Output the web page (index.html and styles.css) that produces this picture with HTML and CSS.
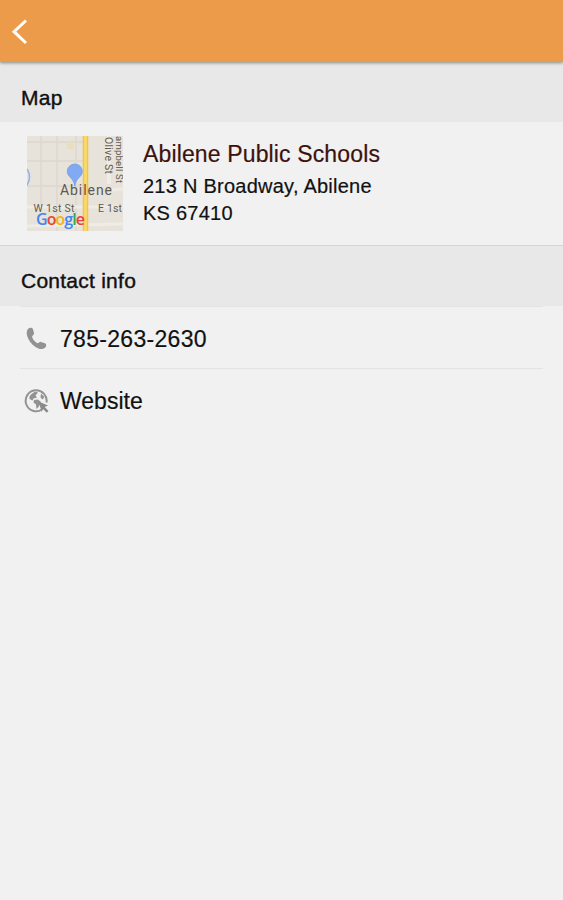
FILE: index.html
```html
<!DOCTYPE html>
<html lang="en">
<head>
    <meta charset="UTF-8">
    <meta name="viewport" content="width=device-width, initial-scale=1.0">
    <title>Abilene Public Schools</title>
    <link rel="stylesheet" href="styles.css">
</head>
<body>
    <header class="topbar">
        <a href="#" class="back" aria-label="Back">
            <svg width="18" height="28" viewBox="0 0 18 28">
                <path d="M15 3.5 L3 14.7 L15 26" fill="none" stroke="#fff" stroke-width="3"/>
            </svg>
        </a>
    </header>

    <h2 class="section-title">Map</h2>
    <div class="place">
        <svg class="thumb" width="96" height="95" viewBox="0 0 96 95">
            <rect width="96" height="95" fill="#e7e3da"/>
            <!-- side streets -->
            <g fill="none" stroke="#dcd8ce" stroke-width="1.3">
                <path d="M0 25 H56 M0 50 H56 M14 0 V70 M30 0 V95 M49 0 V95 M0 6 H56"/>
            </g>
            <rect x="40" y="6" width="7" height="7" fill="#eadfbd"/>
            <path d="M82 0 V48" fill="none" stroke="#efece5" stroke-width="4"/>
            <path d="M0 71 H96 M84 54 L96 53 M0 90 L96 88" fill="none" stroke="#efece5" stroke-width="3"/>
            <path d="M0 33 Q5 41 0 49" fill="none" stroke="#8fb4e8" stroke-width="1.6"/>
            <!-- main road -->
            <path d="M58.5 0 V95" stroke="#efc34c" stroke-width="5.5"/>
            <path d="M58.5 0 V95" stroke="#fbd765" stroke-width="3"/>
            <path d="M47.8 50 C47 42 40.3 41 40.3 35.5 A7.5 7.5 0 0 1 55.3 35.5 C55.3 41 48.6 42 47.8 50 Z" fill="#82aaf3" stroke="#709be6" stroke-width="0.8"/>
            <g class="map-label">
                <text x="33" y="58.5" font-size="14" textLength="52">Abilene</text>
                <text x="6.5" y="75.5" font-size="10.5" textLength="41">W 1st St</text>
                <text x="71" y="75.5" font-size="10.5" textLength="24">E 1st</text>
                <text transform="translate(78 1) rotate(90)" font-size="10.5" textLength="37">Olive St</text>
                <text transform="translate(88.5 0) rotate(90)" font-size="9.5" textLength="47">ampbell St</text>
            </g>
            <text class="map-logo" x="9" y="89" textLength="49"><tspan fill="#4285f4">G</tspan><tspan fill="#ea4335">o</tspan><tspan fill="#f2b50a">o</tspan><tspan fill="#4285f4">g</tspan><tspan fill="#34a853">l</tspan><tspan fill="#ea4335">e</tspan></text>
        </svg>
        <div class="address">
            <h1>Abilene Public Schools</h1>
            <p>213 N Broadway, Abilene<br>KS 67410</p>
        </div>
    </div>

    <h2 class="section-title contact-title">Contact info</h2>
    <ul class="contacts">
        <li>
            <svg width="26" height="26" viewBox="0 0 26 26">
                <path d="M4 3 C5.5 1.3 8 1.3 9 3.2 L10 7 C10.3 8.5 8.5 9.5 8 10.5 C8.8 13.5 10.8 16 13.5 17.3 C15 17.3 15.3 15.6 17 15.9 L21 17.2 C22.7 18 22.5 20.5 21 21.7 C18.5 23.8 15 23.3 11.5 21 C7.500 18.3 4.2 14 3 9.5 C2.5 7 2.5 4.5 4 3 Z" fill="#929292"/>
            </svg>
            <span>785-263-2630</span>
        </li>
        <li>
            <svg width="26" height="26" viewBox="0 0 26 26">
                <path d="M18 21.5 A10.5 10.5 0 1 1 22.5 14.5" fill="none" stroke="#949494" stroke-width="2"/>
                <path d="M7 6.500 L11 3.500 L14 4.500 L11.5 7.5 L13 9.5 L9.5 10.5 L8.5 12.5 L5.5 11 L5.500 8.500 Z M10 12 L14 11.5 L17 14 L14.5 19 L12.5 21 L12 16.5 L9.5 14.5 Z M17 5.5 L20.5 9 L18.5 11.500 L16.500 9.500 Z" fill="#929292"/>
                <path d="M14.5 13.5 L24 17.5 L20.7 19 L24.5 23 L22.8 24.7 L19 21 L17.7 23.8 Z" fill="#8a8a8a"/>
            </svg>
            <span class="website">Website</span>
        </li>
    </ul>
</body>
</html>
```

FILE: styles.css
```css
* {
    box-sizing: border-box;
}

body {
    margin: 0;
    background-color: #f1f1f1;
    color: #111;
    font-family: "Liberation Sans", Arial, sans-serif;
}

h1, h2, p, ul {
    margin: 0;
    padding: 0;
    font-weight: normal;
}

svg {
    display: block;
    flex: none;
}

.topbar {
    position: relative;
    display: flex;
    align-items: center;
    height: 62px;
    padding-left: 11px;
    background-color: #eb9b49;
    box-shadow: 0 1px 3px rgba(70, 75, 60, 0.6);
}

.section-title {
    height: 60px;
    padding: 11px 21px 0;
    background-color: #e8e8e8;
    font-size: 21px;
    line-height: 50px;
    letter-spacing: 0.25px;
    -webkit-text-stroke: 0.4px #111;
}

.contact-title {
    height: 61px;
    padding-top: 10px;
    border-top: 1px solid #d5d5d5;
}

.place {
    display: flex;
    height: 123px;
    padding: 14px 27px;
}

.address {
    margin-left: 20px;
}

.address h1 {
    margin-top: 4px;
    color: #3d120d;
    font-size: 23px;
    line-height: 28px;
    letter-spacing: 0.14px;
    -webkit-text-stroke: 0.2px #3d120d;
}

.address p {
    margin-top: 5px;
    font-size: 20px;
    line-height: 27px;
    letter-spacing: 0.25px;
    -webkit-text-stroke: 0.2px #111;
}

.map-label {
    fill: #5f5a50;
    font-family: Roboto, sans-serif;
}

.map-logo {
    font-family: "Open Sans", sans-serif;
    font-size: 16px;
    font-weight: 600;
}

.contacts {
    margin: 0 20px;
    list-style: none;
}

.contacts li {
    display: flex;
    align-items: center;
    height: 62px;
    padding: 3px 0 0 4px;
    border-top: 1px solid #e3e3e3;
    font-size: 23px;
    letter-spacing: 0.3px;
    -webkit-text-stroke: 0.2px #111;
}

.contacts span {
    margin-left: 10px;
}

.contacts .website {
    letter-spacing: 0;
}
```
